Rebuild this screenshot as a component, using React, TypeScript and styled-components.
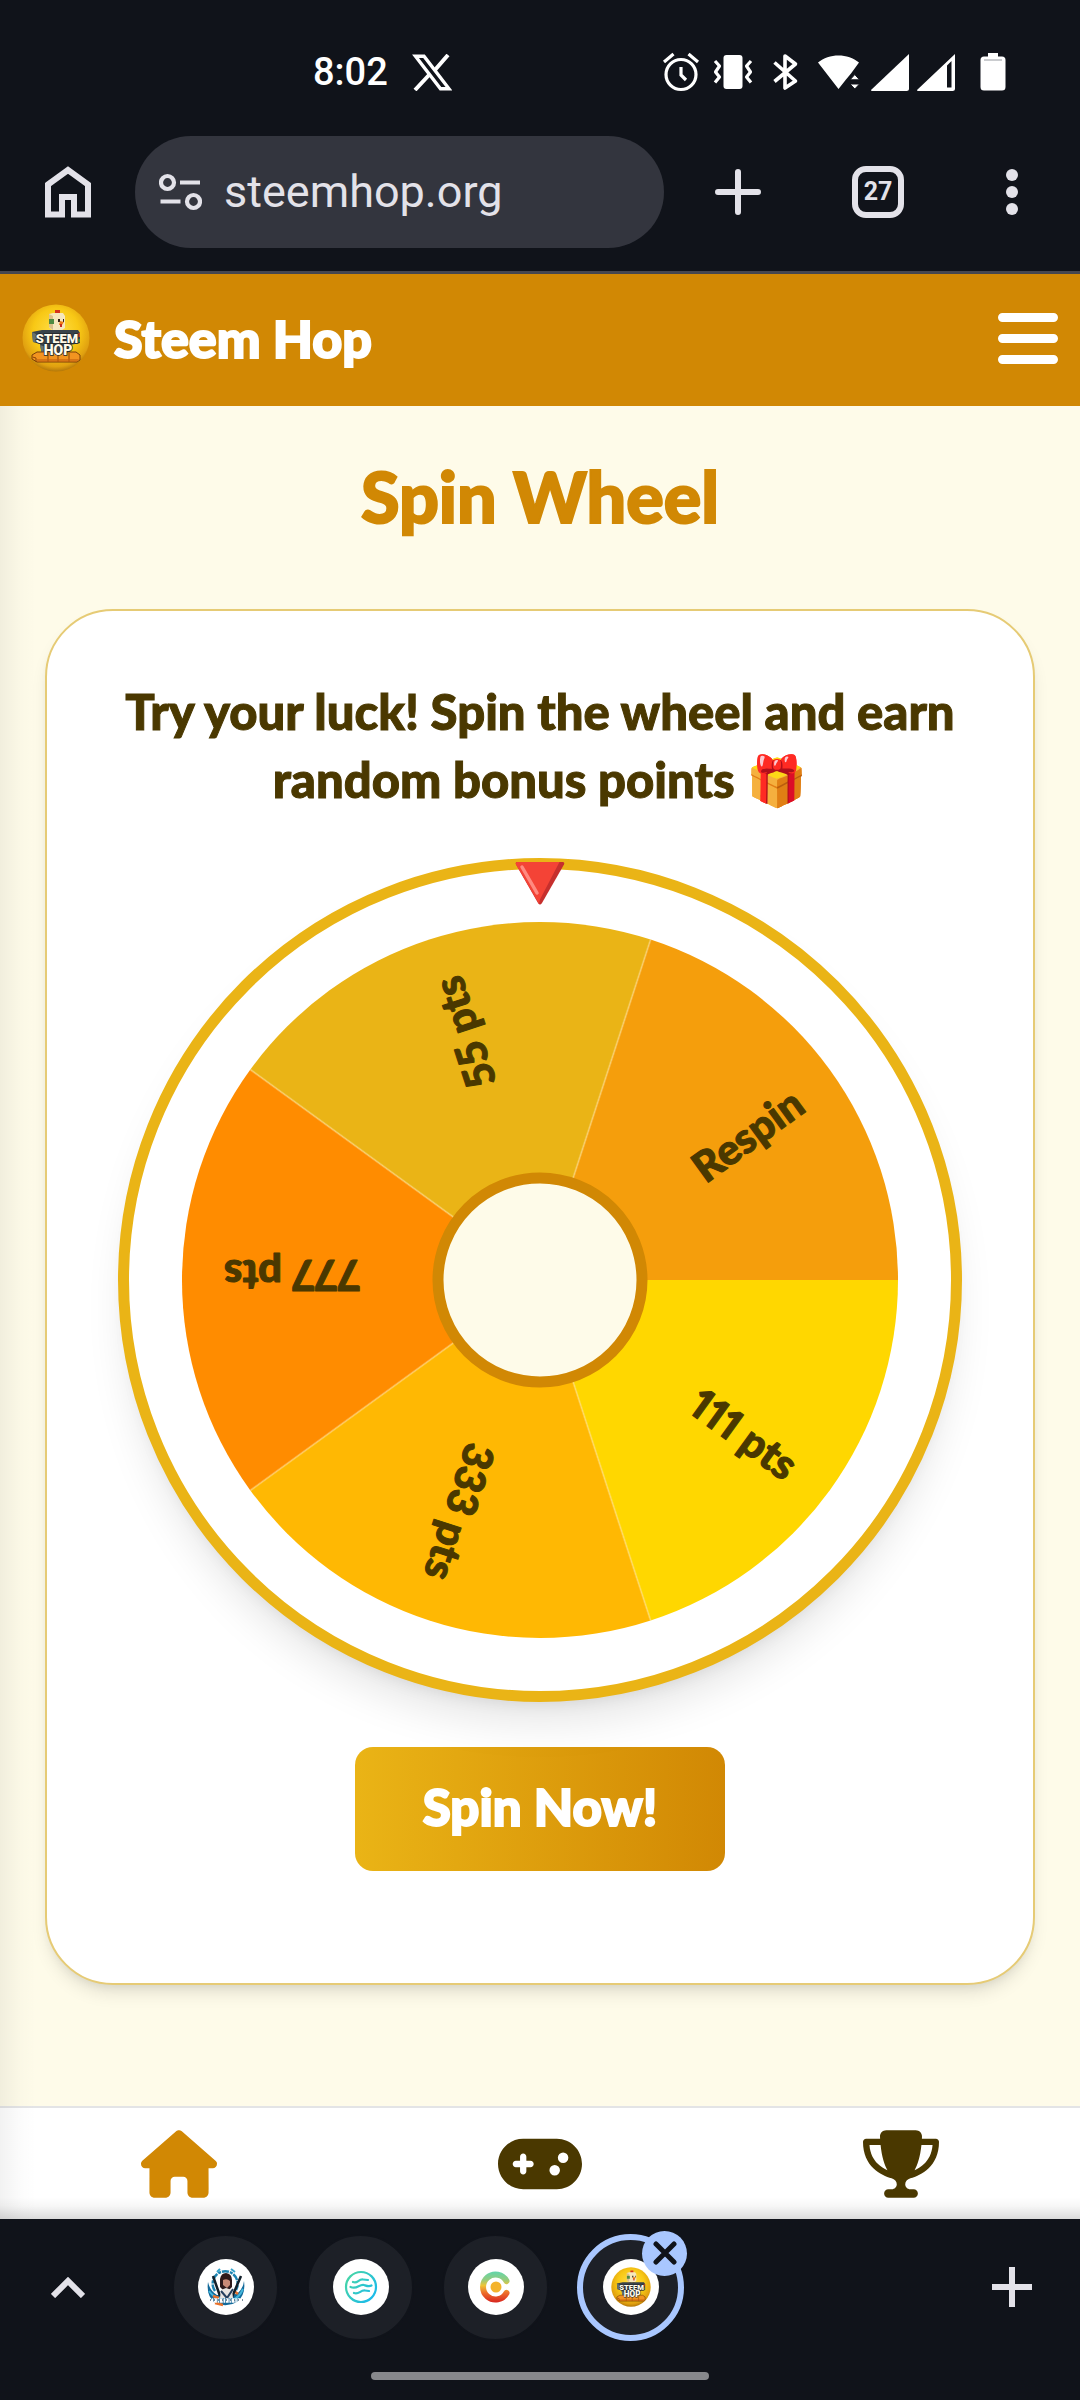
import React, { useState } from "react";
import styled, { createGlobalStyle, css } from "styled-components";
import { FaHouse, FaGamepad, FaTrophy } from "react-icons/fa6";

const brandFont = `"Fredoka One", Lato, "Noto Sans", "Noto Color Emoji", sans-serif`;
const color = {
  chrome: "#10131a",
  chromeText: "#e3e2e9",
  pill: "#33353e",
  orange: "#d18804",
  gold: "#eab416",
  cream: "#fefbe9",
  brown: "#4a3800",
  accent: "#a9c7ff",
};

const heavyText = css`
  font-weight: 900;
  -webkit-text-stroke: 2px currentColor;
`;

const GlobalStyle = createGlobalStyle`
  *, *::before, *::after { box-sizing: border-box; }
  body { margin: 0; background: ${color.chrome}; font-family: Roboto, sans-serif; }
  button { border: 0; padding: 0; background: none; font: inherit; color: inherit; cursor: pointer; }
  svg { display: block; flex: none; }
`;

const Screen = styled.div`
  display: flex;
  flex-direction: column;
  min-height: 100vh;
`;

/* ---------- system status bar ---------- */

const StatusBar = styled.div`
  display: flex;
  align-items: center;
  height: 136px;
  padding: 8px 57px 0 313px;
  color: #fff;
`;

const Clock = styled.time`
  font-size: 38px;
  font-weight: 500;
  line-height: 44px;
  margin-right: 24px;
`;

const StatusIcons = styled.div`
  display: flex;
  align-items: center;
  margin-left: auto;
`;

/* ---------- browser toolbar ---------- */

const Toolbar = styled.div`
  display: flex;
  align-items: flex-start;
  height: 138px;
  border-bottom: 3px solid #45464f;
  color: ${color.chromeText};
`;

const ToolButton = styled.button<{ $width: number }>`
  display: flex;
  align-items: center;
  justify-content: center;
  flex: none;
  width: ${(p) => p.$width}px;
  height: 112px;
`;

const AddressBar = styled.label`
  display: flex;
  align-items: center;
  flex: 1;
  min-width: 0;
  height: 112px;
  padding: 0 24px;
  gap: 22px;
  border-radius: 56px;
  background: ${color.pill};
`;

const AddressInput = styled.input`
  flex: 1;
  min-width: 0;
  padding: 0;
  border: 0;
  outline: 0;
  background: none;
  color: inherit;
  font: 400 45px/56px Roboto, sans-serif;
`;

const TabCount = styled.span`
  display: flex;
  align-items: center;
  justify-content: center;
  width: 52px;
  height: 52px;
  border: 6px solid currentColor;
  border-radius: 14px;
  font-size: 25px;
  font-weight: 700;
  line-height: 28px;
`;

/* ---------- site ---------- */

const Site = styled.div`
  position: relative;
  display: flex;
  flex-direction: column;
  flex: 1;
  background: ${color.cream};
  font-family: ${brandFont};

  &::before,
  &::after {
    content: "";
    position: absolute;
    left: 0;
    bottom: 0;
    pointer-events: none;
  }
  &::before {
    top: 132px;
    width: 36px;
    background: linear-gradient(to right, rgba(0, 0, 0, 0.05), rgba(0, 0, 0, 0.01) 60%, transparent);
  }
  &::after {
    right: 0;
    height: 22px;
    background: linear-gradient(to top, rgba(0, 0, 0, 0.14), rgba(0, 0, 0, 0.03) 60%, transparent);
  }
`;

const Header = styled.header`
  display: flex;
  align-items: center;
  justify-content: space-between;
  height: 132px;
  padding: 0 22px 4px;
  background: ${color.orange};
  color: #fff;
`;

const Brand = styled.a`
  ${heavyText}
  display: flex;
  align-items: center;
  gap: 24px;
  color: inherit;
  font-size: 52px;
  line-height: 68px;
  text-decoration: none;
`;

const Main = styled.main`
  display: flex;
  flex-direction: column;
  flex: 1;
  padding: 45px 45px 121px;
`;

const Title = styled.h1`
  ${heavyText}
  margin: 0 0 68px;
  color: ${color.orange};
  font-size: 70px;
  line-height: 90px;
  text-align: center;
`;

const Card = styled.section`
  display: flex;
  flex-direction: column;
  align-items: center;
  gap: 45px;
  padding: 66px 66px 112px;
  border: 2px solid #e6cb75;
  border-radius: 68px;
  background: #fff;
  box-shadow: 0 11px 17px -3px rgba(0, 0, 0, 0.1), 0 6px 11px -6px rgba(0, 0, 0, 0.1);
`;

const Lead = styled.p`
  margin: 0;
  color: ${color.brown};
  font-size: 49px;
  font-weight: 900;
  -webkit-text-stroke: 1px currentColor;
  line-height: 68px;
  text-align: center;
`;

const WheelFrame = styled.div`
  position: relative;
  width: 100%;
  max-width: 844px;
  border: 11px solid ${color.gold};
  border-radius: 50%;
  background: #fff;
  box-shadow: 0 28px 42px -8px rgba(0, 0, 0, 0.1), 0 11px 17px -11px rgba(0, 0, 0, 0.1);

  > svg {
    width: 100%;
    height: auto;
  }
`;

const Pointer = styled.div`
  position: absolute;
  top: -8px;
  left: 50%;
  transform: translateX(-50%);
`;

const WheelLabel = styled.text`
  fill: ${color.brown};
  stroke: ${color.brown};
  stroke-width: 1px;
  stroke-linejoin: round;
  font: 900 42px ${brandFont};
  font-variant-numeric: proportional-nums;
  text-anchor: end;
`;

const SpinButton = styled.button`
  && {
    ${heavyText}
    padding: 26px 68px 30px;
    border-radius: 18px;
    background: linear-gradient(to right, ${color.gold}, ${color.orange});
    color: #fff;
    font-size: 51px;
    line-height: 68px;
  }
`;

const BottomNav = styled.nav`
  display: flex;
  align-items: center;
  justify-content: space-around;
  height: 113px;
  border-top: 2px solid #e3e4e6;
  background: #fff;
`;

const NavLink = styled.a<{ $width: number; $active?: boolean }>`
  color: ${(p) => (p.$active ? color.orange : color.brown)};
  svg {
    width: ${(p) => p.$width}px;
    height: 68px;
  }
`;

/* ---------- tab strip ---------- */

const TabStrip = styled.div`
  display: flex;
  align-items: center;
  height: 136px;
  color: ${color.chromeText};
`;

const StripButton = styled.button`
  display: flex;
  align-items: center;
  justify-content: center;
  width: 136px;
  height: 112px;
`;

const Tabs = styled.div`
  display: flex;
  flex: 1;
  gap: 28px;
  padding-left: 36px;
`;

const TabItem = styled.div`
  position: relative;
`;

const Tab = styled.button<{ $active?: boolean }>`
  && {
    display: flex;
    align-items: center;
    justify-content: center;
    width: 107px;
    height: 107px;
    border: 2px solid ${color.chrome};
    border-radius: 50%;
    background: #1d2027;
    ${(p) => p.$active && css`border: 6px solid ${color.accent};`}
  }
`;

const Favicon = styled.span`
  display: flex;
  align-items: center;
  justify-content: center;
  flex: none;
  width: 56px;
  height: 56px;
  border-radius: 50%;
  background: #fff;
`;

const CloseBadge = styled.button`
  && {
    position: absolute;
    top: -3px;
    right: -3px;
    display: flex;
    align-items: center;
    justify-content: center;
    width: 45px;
    height: 45px;
    border-radius: 50%;
    background: ${color.accent};
  }
`;

const GestureArea = styled.div`
  display: flex;
  justify-content: center;
  height: 45px;
  padding-top: 17px;
`;

const GestureHandle = styled.div`
  width: 338px;
  height: 8px;
  border-radius: 4px;
  background: #87888c;
`;

/* ---------- drawings ---------- */

const XLogo = () => (
  <svg width="40" height="37" viewBox="0 0 40 37" fill="none" stroke="#fff" strokeWidth="3.4">
    <path d="M3.5 2.2H12L37 34.8H28.5Z" />
    <path d="M36 1L22.5 16.5M17 21L3 36" strokeWidth="4" />
  </svg>
);

const AlarmIcon = () => (
  <svg width="52" height="40" viewBox="-26 -20 52 40" fill="none" stroke="#fff" strokeWidth="3.2">
    <circle cx="0" cy="2.5" r="15" />
    <path d="M0 -5V3L5 8M-17 -10L-7.500 -18M17 -10L7.500 -18" />
  </svg>
);

const VibrateIcon = () => (
  <svg width="52" height="40" viewBox="-26 -20 52 40" fill="none" stroke="#fff" strokeWidth="3.200" strokeLinejoin="round">
    <rect x="-9.500" y="-17" width="19" height="34" rx="3" fill="#fff" stroke="none" />
    <path d="M-18 -11L-13.500 -6L-17.500 0L-13.500 5L-18 10.500M18 -11L13.500 -6L17.500 0L13.500 5L18 10.500" />
  </svg>
);

const BluetoothIcon = () => (
  <svg width="52" height="40" viewBox="-26 -20 52 40" fill="none" stroke="#fff" strokeWidth="3.600" strokeLinejoin="round">
    <path d="M-10.500 -9.500L10.500 9L0 16V-16L10.500 -8L-10.500 9.500" />
  </svg>
);

const WifiIcon = () => (
  <svg width="52" height="40" viewBox="-26 -20 52 40" fill="#fff">
    <path d="M-19 -9.500C-8 -19 11 -19 22 -9.500L14 1.500L9 7.500L1.500 17Z" />
    <path d="M13 7.800L17.800 2.500L22.500 7.800ZM13 12L17.800 17L22.500 12Z" stroke="#10131a" strokeWidth="1" />
  </svg>
);

const SignalIcons = () => (
  <svg width="100" height="40" viewBox="0 0 100 40" fill="#fff">
    <path d="M8 38L46 2V36.500Q46 39 43.500 39H8.500Z" />
    <path fillRule="evenodd" d="M54 38L92 2V36.500Q92 39 89.500 39H54.500ZM84 13.500V35.500H88.500V9Z" />
  </svg>
);

const BatteryIcon = () => (
  <svg width="60" height="40" viewBox="-30 -20 60 40" fill="#fff">
    <path d="M-5 -19H5V-15.500H9Q12.500 -15.500 12.500 -12V15Q12.500 18.500 9 18.500H-9Q-12.500 18.500 -12.500 15V-12Q-12.500 -15.500 -9 -15.500H-5Z" />
    <path d="M-9 -12H9" stroke="#b9bbbf" strokeWidth="1.500" />
  </svg>
);

const HomeOutline = () => (
  <svg width="46" height="52" viewBox="0 0 46 52" fill="none" stroke="currentColor" strokeWidth="6">
    <path d="M3 18.500L23 4L43 18.500V48.500H29V31H17V48.500H3Z" />
  </svg>
);

const TuneIcon = () => (
  <svg width="43" height="38" viewBox="0 0 43 38" fill="none" stroke="currentColor" strokeWidth="4.200">
    <circle cx="8.500" cy="9.500" r="6.500" />
    <circle cx="34.500" cy="28.500" r="6.500" />
    <path d="M21 9.500H41M1.500 28.500H21.500" />
  </svg>
);

const PlusIcon = ({ size, round }: { size: number; round?: boolean }) => (
  <svg width={size} height={size} viewBox={`0 0 ${size} ${size}`} stroke="currentColor" strokeWidth="6" strokeLinecap={round ? "round" : "butt"}>
    <path d={round ? `M3 ${size / 2}H${size - 3}M${size / 2} 3V${size - 3}` : `M0 ${size / 2}H${size}M${size / 2} 0V${size}`} />
  </svg>
);

const DotsIcon = () => (
  <svg width="12" height="46" viewBox="0 0 12 46" fill="currentColor">
    <circle cx="6" cy="6" r="6" />
    <circle cx="6" cy="23" r="6" />
    <circle cx="6" cy="40" r="6" />
  </svg>
);

const MenuIcon = () => (
  <svg width="60" height="51" viewBox="0 0 60 51" stroke="#fff" strokeWidth="9" strokeLinecap="round">
    <path d="M4.500 4.500H55.500M4.500 25.500H55.500M4.500 46.500H55.500" />
  </svg>
);

const ChevronUp = () => (
  <svg width="34" height="22" viewBox="0 0 34 22" fill="none" stroke="currentColor" strokeWidth="6">
    <path d="M2 20L17 5L32 20" />
  </svg>
);

const CloseIcon = () => (
  <svg width="24" height="24" viewBox="0 0 24 24" stroke="#10131a" strokeWidth="5" strokeLinecap="round">
    <path d="M3 3L21 21M21 3L3 21" />
  </svg>
);

const HopLogo = ({ size, id }: { size: number; id: string }) => (
  <svg width={size} height={size} viewBox="0 0 68 68" role="img" aria-label="Steem Hop logo">
    <defs>
      <radialGradient id={id} cx="0.5" cy="0.4" r="0.62">
        <stop offset="0" stopColor="#ffe04a" />
        <stop offset="0.55" stopColor="#f8c815" />
        <stop offset="0.85" stopColor="#e0a010" />
        <stop offset="1" stopColor="#a86d08" />
      </radialGradient>
    </defs>
    <circle cx="34" cy="34" r="33.500" fill={`url(#${id})`} />
    <path d="M33 6H38V11H33Z" fill="#d5321c" />
    <path d="M27 10L31 9H41L43 12V24L40 26H30L27 23Z" fill="#f6e7bd" />
    <path d="M27 10L31 12V26L27 23Z" fill="#dcc08a" />
    <path d="M27 15H32V20H27Z" fill="#4e8a42" />
    <path d="M36 15H38V18H36ZM41 15H42V18H41Z" fill="#30221a" />
    <path d="M38 17L42 18L40 21H37Z" fill="#ec7a18" />
    <path d="M38 20H40V23H38Z" fill="#c92c1c" />
    <path d="M31 26H34V29H31ZM37 26H40V29H37Z" fill="#e58a18" />
    <path d="M10 28L20 26H56L58 29V39L48 41V51H20L18 40L11 38Z" fill="#39434a" />
    <path d="M10 28L16 31V38L11 38ZM18 41L24 43V51H20Z" fill="#66716f" />
    <path d="M55 29H58V33H55Z" fill="#c84026" />
    <path d="M55 35H58V38H55Z" fill="#3b8a40" />
    <path d="M10 51L15 48H54L58 51V56L55 58H15L10 55Z" fill="#f29420" stroke="#7a4107" strokeWidth="1" />
    <path d="M10.500 53L14 54V58M26 49V58M36 49V58M47 49V58" stroke="#8a4507" fill="none" />
    <path d="M15 55H57L55 58H15Z" fill="#c4600f" opacity="0.6" />
    <g fill="#fffbea" stroke="#23282b" strokeWidth="1.500" paintOrder="stroke" fontFamily="Roboto, sans-serif" fontWeight="900" textAnchor="middle">
      <text x="35" y="39" fontSize="13">STEEM</text>
      <text x="36" y="51" fontSize="14">HOP</text>
    </g>
  </svg>
);

const ArtLogo = () => (
  <svg width="40" height="40" viewBox="0 0 40 40" fill="none">
    <path d="M9 24A12.500 12.500 0 1 1 30 23" stroke="#1d83b0" strokeWidth="2.500" strokeDasharray="7 1 3 1" />
    <path d="M11 5L14 2M25 2L29 5" stroke="#36a4cc" strokeWidth="2" />
    <path d="M2 15Q4 24 11 28L31 27Q37 22 38 14Q40 28 31 35Q21 41 9 36Q0 29 2 15Z" fill="#12699a" />
    <path d="M3 24Q8 31 14 31M37 22Q33 31 26 33" stroke="#43b6db" strokeWidth="2" />
    <path d="M7 29L13 31M28 24L32 27M9 36L17 38" stroke="#e8722c" strokeWidth="2.500" />
    <path d="M7 9L14 29M35 9L26 30" stroke="#12202b" strokeWidth="2.500" />
    <path d="M14 20V12Q15 6 20 6Q26 7 26 13V20L23 23H17Z" fill="#2e1a1b" />
    <path d="M17 13Q21 11 24 14V18L21 21L17 18Z" fill="#c98a76" />
    <path d="M15 23L20 21L26 23L27 31H14Z" fill="#e9e4e0" />
    <path d="M15 24L21 31L27 22" stroke="#26405e" strokeWidth="2" />
    <path d="M2 33.500H38" stroke="#fff" strokeWidth="4.500" strokeDasharray="3 .7 1.500 .7" />
    <path d="M4 33H37" stroke="#49657b" strokeWidth="1.500" strokeDasharray="1 3" />
  </svg>
);

const WavesLogo = () => (
  <svg width="34" height="34" viewBox="0 0 34 34" fill="none" stroke="url(#waves)" strokeWidth="2.200" strokeLinecap="round">
    <defs>
      <linearGradient id="waves" gradientUnits="userSpaceOnUse" x1="2" y1="6" x2="32" y2="28">
        <stop offset="0" stopColor="#48d6a4" />
        <stop offset="1" stopColor="#18b9ef" />
      </linearGradient>
    </defs>
    <circle cx="17" cy="17" r="15" />
    <path d="M9 12C14 14 14 9 19 9.500L24 10M6.500 17C13 20 15 14 20 15C23 16 25 17 27.500 15.500M10 23C15 25 16 20 21 20.500L25 21" />
  </svg>
);

const CoilLogo = () => (
  <svg width="32" height="34" viewBox="0 0 32 34" fill="none">
    <defs>
      <linearGradient id="coil" gradientUnits="userSpaceOnUse" x1="16" y1="2" x2="16" y2="32">
        <stop offset="0" stopColor="#63d5a9" />
        <stop offset="0.25" stopColor="#93cc80" />
        <stop offset="0.45" stopColor="#efc435" />
        <stop offset="0.7" stopColor="#ed6c2b" />
        <stop offset="1" stopColor="#d8281f" />
      </linearGradient>
    </defs>
    <path d="M26.500 11A12.500 12.500 0 1 0 26.500 23" stroke="url(#coil)" strokeWidth="6" strokeLinecap="round" />
    <circle cx="16" cy="17" r="5.500" fill="#f4b32c" />
  </svg>
);

const PointerIcon = () => (
  <svg width="50" height="44" viewBox="0 0 50 44" aria-hidden="true">
    <path d="M2.500 1H47.500Q50 1 49 3.500L27 42Q25 45 23 42L1 3.500Q0 1 2.500 1Z" fill="#c62f2d" />
    <path d="M2.500 1H44.500L25 38.500L24 43L1 3.500Q0 1 2.500 1Z" fill="#f44336" />
    <path d="M7 6L22 32" stroke="#ff8a80" strokeWidth="3.500" strokeLinecap="round" />
  </svg>
);

/* ---------- wheel ---------- */

type Segment = { label: string; fill: string };

const segments: Segment[] = [
  { label: "111 pts", fill: "#ffd700" },
  { label: "333 pts", fill: "#ffb803" },
  { label: "777 pts", fill: "#ff8c00" },
  { label: "55 pts", fill: "#eab416" },
  { label: "Respin", fill: "#f59e0c" },
];

const RADIUS = 358;
const step = 360 / segments.length;

const pointAt = (deg: number) => {
  const a = (deg * Math.PI) / 180;
  return `${(RADIUS * Math.cos(a)).toFixed(2)} ${(RADIUS * Math.sin(a)).toFixed(2)}`;
};

const Wheel = ({ turn }: { turn: number }) => (
  <svg viewBox="-411 -411 822 822" role="img" aria-label="Prize wheel">
    <g transform={`rotate(${turn})`}>
      {segments.map((s, i) => (
        <path
          key={s.label}
          d={`M0 0L${pointAt(i * step)}A${RADIUS} ${RADIUS} 0 0 1 ${pointAt((i + 1) * step)}Z`}
          fill={s.fill}
        />
      ))}
      {segments.slice(1).map((s, i) => (
        <path key={s.label} d={`M0 0L${pointAt((i + 1) * step)}`} stroke="#ffe9a8" strokeOpacity="0.4" strokeWidth="2" />
      ))}
      {segments.map((s, i) => (
        <g key={s.label} transform={`rotate(${(i + 0.5) * step})`}>
          <WheelLabel x="316" y="20">{s.label}</WheelLabel>
        </g>
      ))}
    </g>
    <circle r="102" fill={color.cream} stroke={color.orange} strokeWidth="11" />
  </svg>
);

export default function App() {
  const [turn, setTurn] = useState(0);
  return (
    <Screen>
      <GlobalStyle />
      <StatusBar>
        <Clock>8:02</Clock>
        <XLogo />
        <StatusIcons>
          <AlarmIcon />
          <VibrateIcon />
          <BluetoothIcon />
          <WifiIcon />
          <SignalIcons />
          <BatteryIcon />
        </StatusIcons>
      </StatusBar>

      <Toolbar>
        <ToolButton $width={135} aria-label="Home"><HomeOutline /></ToolButton>
        <AddressBar>
          <TuneIcon />
          <AddressInput aria-label="Address" defaultValue="steemhop.org" />
        </AddressBar>
        <ToolButton $width={148} aria-label="New tab"><PlusIcon size={46} round /></ToolButton>
        <ToolButton $width={132} aria-label="Open tabs"><TabCount>27</TabCount></ToolButton>
        <ToolButton $width={136} aria-label="More options"><DotsIcon /></ToolButton>
      </Toolbar>

      <Site>
        <Header>
          <Brand href="#">
            <HopLogo size={68} id="logo-header" />
            Steem Hop
          </Brand>
          <button aria-label="Menu"><MenuIcon /></button>
        </Header>

        <Main>
          <Title>Spin Wheel</Title>
          <Card>
            <Lead>Try your luck! Spin the wheel and earn random bonus points 🎁</Lead>
            <WheelFrame>
              <Wheel turn={turn} />
              <Pointer><PointerIcon /></Pointer>
            </WheelFrame>
            <SpinButton onClick={() => setTurn(turn + 72)}>Spin Now!</SpinButton>
          </Card>
        </Main>

        <BottomNav>
          <NavLink href="#" $width={76} $active aria-label="Home"><FaHouse /></NavLink>
          <NavLink href="#" $width={84} aria-label="Games"><FaGamepad /></NavLink>
          <NavLink href="#" $width={76} aria-label="Leaderboard"><FaTrophy /></NavLink>
        </BottomNav>
      </Site>

      <TabStrip>
        <StripButton aria-label="Show all tabs"><ChevronUp /></StripButton>
        <Tabs>
          <TabItem><Tab aria-label="Art tab"><Favicon><ArtLogo /></Favicon></Tab></TabItem>
          <TabItem><Tab aria-label="Waves tab"><Favicon><WavesLogo /></Favicon></Tab></TabItem>
          <TabItem><Tab aria-label="Coil tab"><Favicon><CoilLogo /></Favicon></Tab></TabItem>
          <TabItem>
            <Tab $active aria-label="Steem Hop tab"><Favicon><HopLogo size={40} id="logo-tab" /></Favicon></Tab>
            <CloseBadge aria-label="Close tab"><CloseIcon /></CloseBadge>
          </TabItem>
        </Tabs>
        <StripButton aria-label="New tab in group"><PlusIcon size={40} /></StripButton>
      </TabStrip>
      <GestureArea><GestureHandle /></GestureArea>
    </Screen>
  );
}
